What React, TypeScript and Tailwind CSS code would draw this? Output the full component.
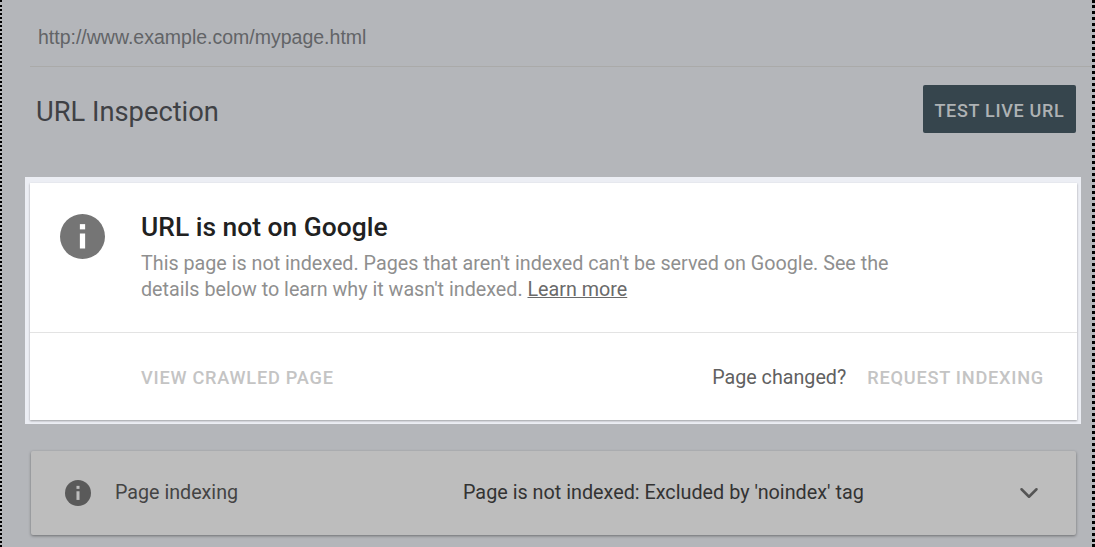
import { ChevronDown } from "lucide-react";

const InfoIcon = ({ size, fg, bg }: { size: number; fg: string; bg: string }) => (
  <svg width={size} height={size} viewBox="0 0 24 24" className="shrink-0">
    <circle cx="12" cy="12" r="12" fill={bg} />
    <rect x="10.6" y="5.4" width="2.8" height="2.8" fill={fg} />
    <rect x="10.6" y="10.4" width="2.8" height="8" fill={fg} />
  </svg>
);

export default function App() {
  return (
    <div className="h-[547px] w-[1095px] overflow-hidden bg-[#b4b6ba] font-['Roboto',sans-serif] border-l-2 border-r-3 border-dotted border-l-black border-r-black">
      {/* url bar */}
      <div className="ml-[28px] h-[67px] border-b border-[#aaaaa9] pt-[26px] pl-[8px] font-['Liberation_Sans',sans-serif] text-[19.5px] leading-[22px] text-[#626467]">
        http://www.example.com/mypage.html
      </div>

      {/* title row */}
      <div className="mt-[18px] ml-[34px] mr-[16px] flex items-start justify-between">
        <h1 className="pt-[11px] text-[27.3px] leading-[32px] text-[#3f4145]">URL Inspection</h1>
        <button className="h-[48px] w-[153px] rounded-[2px] bg-[#36454d] pt-[2px] text-[18px] font-medium tracking-[0.7px] text-[#aeb2b4]">
          TEST LIVE URL
        </button>
      </div>

      {/* highlighted card */}
      <div className="mt-[44px] ml-[23px] mr-[11px] border-[5px] border-t-[6px] border-r-[4px] border-b-[4px] border-[#eceef4]">
        <div className="h-[237px] bg-white shadow-[0_1px_2px_rgba(0,0,0,0.35)]">
          <div className="flex h-[150px] border-b border-[#e3e3e3] pl-[30px] pt-[31px]">
            <InfoIcon size={45} fg="#ffffff" bg="#757575" />
            <div className="ml-[36px]">
              <h2 className="text-[26.4px] leading-[26px] font-medium text-[#212121]">URL is not on Google</h2>
              <p className="mt-[11px] w-[770px] text-[19.73px] leading-[26px] text-[#8f8f8f]">
                This page is not indexed. Pages that aren't indexed can't be served on Google. See the details below to
                learn why it wasn't indexed. <span className="text-[#6a6a6a] underline">Learn more</span>
              </p>
            </div>
          </div>
          <div className="flex h-[86px] items-center justify-between pl-[111px] pr-[33px] pt-[3px] text-[18.2px] font-medium tracking-[0.75px] text-[#c4c4c4]">
            <span>VIEW CRAWLED PAGE</span>
            <div className="flex items-center gap-[21px]">
              <span className="text-[19.7px] font-normal tracking-normal text-[#616161]">Page changed?</span>
              <span>REQUEST INDEXING</span>
            </div>
          </div>
        </div>
      </div>

      {/* page indexing row */}
      <div className="mt-[27px] ml-[29px] mr-[16px] flex h-[84px] items-center rounded-[2px] bg-[#bdbdbd] pl-[34px] pr-[32px] shadow-[0_1px_3px_rgba(0,0,0,0.4)]">
        <InfoIcon size={26} fg="#bdbdbd" bg="#5a5a5a" />
        <span className="ml-[24px] w-[348px] text-[19.7px] text-[#444444]">Page indexing</span>
        <span className="flex-1 text-[19.8px] text-[#333333]">Page is not indexed: Excluded by 'noindex' tag</span>
        <ChevronDown size={30} strokeWidth={2} className="text-[#555555]" />
      </div>
    </div>
  );
}
